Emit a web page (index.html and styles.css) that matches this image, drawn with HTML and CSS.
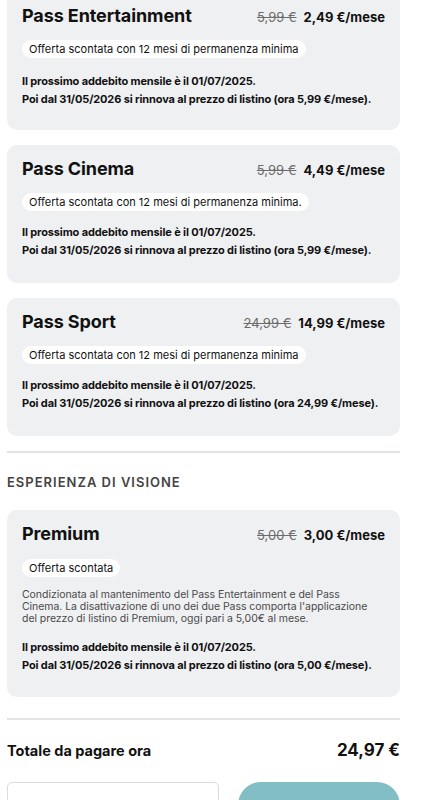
FILE: index.html
```html
<!DOCTYPE html>
<html lang="it">
<head>
<meta charset="utf-8">
<title>Riepilogo</title>
<link rel="stylesheet" href="styles.css">
</head>
<body>
<main class="page">
  <section class="card card-first">
    <div class="card-head">
      <h2 class="card-title">Pass Entertainment</h2>
      <div class="price"><s class="old">5,99 €</s><span class="new">2,49 €/mese</span></div>
    </div>
    <span class="pill">Offerta scontata con 12 mesi di permanenza minima</span>
    <p class="note">Il prossimo addebito mensile è il 01/07/2025.<br>Poi dal 31/05/2026 si rinnova al prezzo di listino (ora 5,99 €/mese).</p>
  </section>

  <section class="card">
    <div class="card-head">
      <h2 class="card-title">Pass Cinema</h2>
      <div class="price"><s class="old">5,99 €</s><span class="new">4,49 €/mese</span></div>
    </div>
    <span class="pill">Offerta scontata con 12 mesi di permanenza minima.</span>
    <p class="note">Il prossimo addebito mensile è il 01/07/2025.<br>Poi dal 31/05/2026 si rinnova al prezzo di listino (ora 5,99 €/mese).</p>
  </section>

  <section class="card">
    <div class="card-head">
      <h2 class="card-title">Pass Sport</h2>
      <div class="price"><s class="old">24,99 €</s><span class="new">14,99 €/mese</span></div>
    </div>
    <span class="pill">Offerta scontata con 12 mesi di permanenza minima</span>
    <p class="note">Il prossimo addebito mensile è il 01/07/2025.<br>Poi dal 31/05/2026 si rinnova al prezzo di listino (ora 24,99 €/mese).</p>
  </section>

  <hr class="divider">
  <h3 class="section-label">ESPERIENZA DI VISIONE</h3>

  <section class="card card-premium">
    <div class="card-head">
      <h2 class="card-title">Premium</h2>
      <div class="price"><s class="old">5,00 €</s><span class="new">3,00 €/mese</span></div>
    </div>
    <span class="pill">Offerta scontata</span>
    <p class="desc">Condizionata al mantenimento del Pass Entertainment e del Pass<br>Cinema. La disattivazione di uno dei due Pass comporta l'applicazione<br>del prezzo di listino di Premium, oggi pari a 5,00€ al mese.</p>
    <p class="note">Il prossimo addebito mensile è il 01/07/2025.<br>Poi dal 31/05/2026 si rinnova al prezzo di listino (ora 5,00 €/mese).</p>
  </section>

  <hr class="divider divider-total">
  <div class="total">
    <span class="total-label">Totale da pagare ora</span>
    <span class="total-value">24,97 €</span>
  </div>

  <div class="promo">
    <input class="promo-input" type="text" placeholder="Inserisci qui il codice">
    <button class="promo-btn" type="button">ATTIVA IL CODICE</button>
  </div>
</main>
</body>
</html>
```

FILE: styles.css
```css
* { box-sizing: border-box; }
html, body { margin: 0; padding: 0; background: #fff; }
body {
  font-family: Inter, "Noto Sans", "Liberation Sans", sans-serif;
  color: #111;
  overflow: hidden;
}
.page {
  width: 393px;
  margin: -8px 0 0 7px;
  display: flex;
  flex-direction: column;
}
.card {
  background: #eff0f2;
  border-radius: 10px;
  padding: 12px 15px 24px;
  margin-bottom: 15px;
  display: flex;
  flex-direction: column;
  align-items: flex-start;
}
.card-first { padding-bottom: 22px; }
.card-first .note { margin-top: 14px; }
.card-head {
  width: 100%;
  display: flex;
  justify-content: space-between;
  align-items: baseline;
}
.card-title {
  margin: 0;
  font-size: 18px;
  line-height: 24px;
  font-weight: 700;
  letter-spacing: -0.1px;
}
.price {
  display: flex;
  gap: 7px;
  align-items: baseline;
  font-size: 13px;
}
.old {
  color: #6b6b6b;
  font-weight: 400;
}
.new {
  font-weight: 700;
}
.pill {
  margin-top: 12px;
  background: #fff;
  border-radius: 9px;
  height: 18px;
  line-height: 18px;
  padding: 0 7px;
  font-size: 11px;
}
.card-premium .pill { margin-top: 13px; }
.note {
  margin: 12px 0 0;
  font-size: 11px;
  line-height: 18px;
  font-weight: 700;
  letter-spacing: -0.13px;
  white-space: nowrap;
}
.desc {
  margin: 12px 0 0;
  font-size: 10.5px;
  line-height: 12px;
  color: #4a4a4a;
  white-space: nowrap;
  letter-spacing: -0.05px;
}
.card-premium { padding-bottom: 23px; }
.card-premium .note { margin-top: 13px; }
.divider {
  width: 100%;
  margin: 0;
  border: 0;
  border-top: 2px solid #e3e3e3;
}
.section-label {
  margin: 21px 0 20px;
  font-size: 13px;
  line-height: 16px;
  font-weight: 600;
  letter-spacing: 1px;
  color: #444;
}
.divider-total { margin-top: 6px; }
.total {
  display: flex;
  justify-content: space-between;
  align-items: baseline;
  margin-top: 20px;
}
.total-label {
  font-size: 14.5px;
  font-weight: 700;
}
.total-value {
  font-size: 17px;
  font-weight: 700;
}
.promo {
  display: flex;
  gap: 19px;
  margin-top: 22px;
}
.promo-input {
  width: 212px;
  height: 46px;
  border: 1px solid #dcdcdc;
  border-radius: 5px;
  padding: 0 15px;
  font-family: inherit;
  font-size: 12px;
  color: #333;
}
.promo-input::placeholder { color: #555; }
.promo-btn {
  flex: 1;
  height: 46px;
  border: 0;
  border-radius: 23px;
  background: #82bfc4;
  color: #fff;
  font-family: inherit;
  font-weight: 700;
  font-size: 13px;
  letter-spacing: 1px;
}
```
